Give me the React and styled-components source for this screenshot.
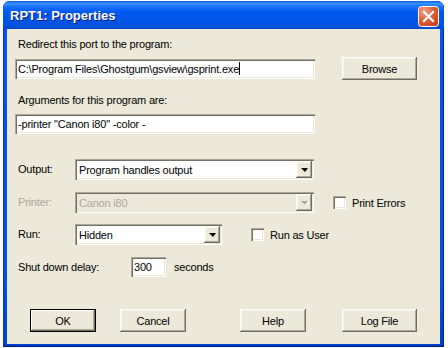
import styled, { createGlobalStyle, css } from "styled-components";

const GlobalStyle = createGlobalStyle`
    html, body {
        margin: 0;
        padding: 0;
        background: #ffffff;
    }
    body {
        width: 448px;
        height: 348px;
        overflow: hidden;
        font-family: "Liberation Sans", Arial, sans-serif;
        font-size: 11px;
        letter-spacing: -0.2px;
        color: #000000;
    }
`;

const sunken = css`
    box-shadow: inset 1px 1px #aca899, inset 2px 2px #716f64,
        inset -1px -1px #ffffff, inset -2px -2px #ece9d8;
`;

const raised = css`
    box-shadow: inset -1px -1px #716f64, inset 1px 1px #ffffff,
        inset -2px -2px #aca899, inset 2px 2px #f5f3ea;
`;

const Window = styled.div`
    width: 441px;
    height: 346px;
    margin: 1px 0 0 3px;
    display: flex;
    flex-direction: column;
    border-radius: 7px 7px 0 0;
    background: linear-gradient(to bottom, #0058ee 0%, #0054e3 80%, #0040c8 100%);
    overflow: hidden;
    box-shadow: inset 1px 0 #0831d9, inset -1px 0 #001ea0, inset 0 -1px #001480;
`;

const TitleBar = styled.div`
    height: 28px;
    flex: none;
    display: flex;
    align-items: center;
    justify-content: space-between;
    padding: 0 5px 0 7px;
    background: linear-gradient(
        to bottom,
        #0a5fea 0%,
        #3d95ff 10%,
        #1e74fa 18%,
        #0058ee 40%,
        #0055e5 75%,
        #0050dc 90%,
        #0046cc 100%
    );
`;

const Title = styled.span`
    font-family: "Liberation Sans", Arial, sans-serif;
    font-weight: bold;
    font-size: 13px;
    letter-spacing: 0;
    color: #ffffff;
    text-shadow: 1px 1px #0a1883;
    margin-top: 1px;
`;

const CloseButton = styled.div`
    width: 21px;
    height: 21px;
    margin-top: 2px;
    display: flex;
`;

const Client = styled.div`
    flex: 1;
    margin: 0 4px 3px 4px;
    background: #ece9d8;
    padding: 9px 0 0 8px;
    display: flex;
    flex-direction: column;
`;

const Label = styled.div`
    height: 13px;
    line-height: 13px;
    margin-left: 3px;
    white-space: nowrap;
    color: ${({ disabled }) => (disabled ? "#aca899" : "#000000")};
    width: ${({ width }) => (width ? `${width}px` : "auto")};
    flex: none;
`;

const Row = styled.div`
    display: flex;
    align-items: center;
    margin-top: ${({ top }) => top || 0}px;
`;

const TextBox = styled.div`
    width: ${({ width }) => width}px;
    height: 20px;
    box-sizing: border-box;
    padding: 0 3px;
    background: #ffffff;
    ${sunken};
    display: flex;
    align-items: center;
    white-space: nowrap;
    overflow: hidden;
    flex: none;
`;

const Caret = styled.span`
    display: inline-block;
    width: 1px;
    height: 13px;
    background: #000000;
`;

const Button = styled.div`
    width: ${({ width }) => width}px;
    height: 23px;
    box-sizing: border-box;
    margin-left: ${({ left }) => left || 0}px;
    background: #ece9d8;
    ${raised};
    display: flex;
    align-items: center;
    justify-content: center;
    flex: none;
    ${({ isDefault }) =>
        isDefault &&
        css`
            border: 1px solid #000000;
            box-shadow: inset -1px -1px #716f64, inset 1px 1px #ffffff,
                inset -2px -2px #aca899;
        `}
`;

const Combo = styled.div`
    width: ${({ width }) => width}px;
    height: 21px;
    box-sizing: border-box;
    padding: 2px 2px 2px 4px;
    background: ${({ disabled }) => (disabled ? "#ece9d8" : "#ffffff")};
    color: ${({ disabled }) => (disabled ? "#aca899" : "#000000")};
    ${sunken};
    display: flex;
    align-items: center;
    justify-content: space-between;
    flex: none;
`;

const ComboArrow = styled.div`
    width: 16px;
    height: 17px;
    box-sizing: border-box;
    background: #ece9d8;
    ${raised};
    display: flex;
    align-items: center;
    justify-content: center;

    &::after {
        content: "";
        width: 0;
        height: 0;
        margin-left: 1px;
        border-left: 4px solid transparent;
        border-right: 3px solid transparent;
        border-top: 4px solid ${({ disabled }) => (disabled ? "#aca899" : "#000000")};
        ${({ disabled }) => disabled && "filter: drop-shadow(1px 1px #ffffff);"}
    }
`;

const CheckGroup = styled.div`
    display: flex;
    align-items: center;
    margin-left: ${({ left }) => left}px;
    gap: 6px;
    white-space: nowrap;
`;

const CheckBox = styled.div`
    width: 13px;
    height: 13px;
    box-sizing: border-box;
    background: #ffffff;
    ${sunken};
`;

const Suffix = styled.span`
    margin-left: 8px;
`;

function Dropdown({ width, value, disabled }) {
    return (
        <Combo width={width} disabled={disabled}>
            <span>{value}</span>
            <ComboArrow disabled={disabled} />
        </Combo>
    );
}

function CloseIcon() {
    return (
        <svg width="21" height="21" viewBox="0 0 21 21">
            <defs>
                <radialGradient id="cg" cx="0.3" cy="0.25" r="0.9">
                    <stop offset="0" stopColor="#f3a28a" />
                    <stop offset="0.45" stopColor="#e2653f" />
                    <stop offset="1" stopColor="#c2401c" />
                </radialGradient>
            </defs>
            <rect x="0.5" y="0.5" width="20" height="20" rx="3" fill="url(#cg)" stroke="#ffffff" />
            <path d="M6 6 L15 15 M15 6 L6 15" stroke="#ffffff" strokeWidth="2.2" strokeLinecap="square" />
        </svg>
    );
}

export default function App() {
    return (
        <>
            <GlobalStyle />
            <Window>
                <TitleBar>
                    <Title>RPT1: Properties</Title>
                    <CloseButton>
                        <CloseIcon />
                    </CloseButton>
                </TitleBar>
                <Client>
                    <Label>Redirect this port to the program:</Label>
                    <Row top={6}>
                        <TextBox width={300}>
                            C:\Program Files\Ghostgum\gsview\gsprint.exe
                            <Caret />
                        </TextBox>
                        <Button width={75} left={27}>Browse</Button>
                    </Row>
                    <Row top={14}>
                        <Label>Arguments for this program are:</Label>
                    </Row>
                    <Row top={7}>
                        <TextBox width={300}>-printer "Canon i80" -color -</TextBox>
                    </Row>
                    <Row top={25}>
                        <Label width={57}>Output:</Label>
                        <Dropdown width={239} value="Program handles output" />
                    </Row>
                    <Row top={12}>
                        <Label width={57} disabled>Printer:</Label>
                        <Dropdown width={239} value="Canon i80" disabled />
                        <CheckGroup left={19}>
                            <CheckBox />
                            <span>Print Errors</span>
                        </CheckGroup>
                    </Row>
                    <Row top={11}>
                        <Label width={57}>Run:</Label>
                        <Dropdown width={147} value="Hidden" />
                        <CheckGroup left={29}>
                            <CheckBox />
                            <span>Run as User</span>
                        </CheckGroup>
                    </Row>
                    <Row top={12}>
                        <Label width={113}>Shut down delay:</Label>
                        <TextBox width={35}>300</TextBox>
                        <Suffix>seconds</Suffix>
                    </Row>
                    <Row top={32}>
                        <Button width={66} left={15} isDefault>OK</Button>
                        <Button width={66} left={24}>Cancel</Button>
                        <Button width={66} left={54}>Help</Button>
                        <Button width={75} left={36}>Log File</Button>
                    </Row>
                </Client>
            </Window>
        </>
    );
}
